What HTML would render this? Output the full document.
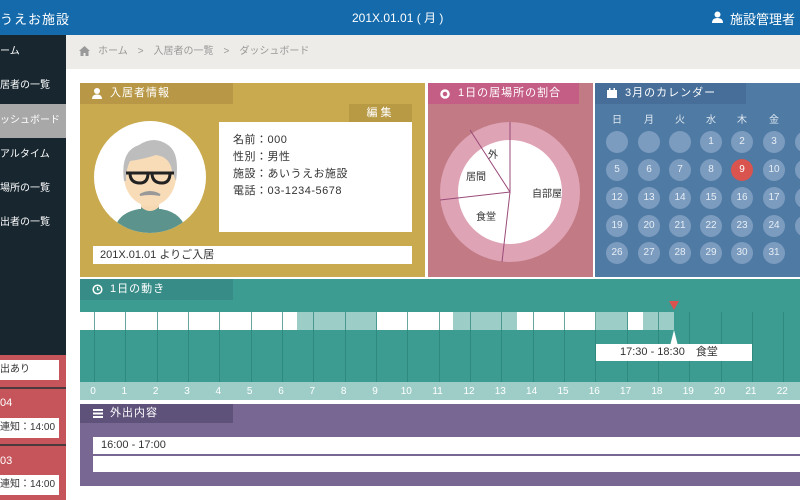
<!DOCTYPE html>
<html><head><meta charset="utf-8"><style>
*{margin:0;padding:0;box-sizing:border-box}
body{width:800px;height:500px;overflow:hidden;background:#fff;font-family:"Liberation Sans","Noto Sans CJK JP",sans-serif;position:relative;font-size:11px}
.a{position:absolute}
.hdr{left:0;top:0;width:800px;height:35px;background:#146aab;color:#fff}
.side{left:0;top:35px;width:66px;height:465px;background:#17262f}
.side div{position:absolute;left:0;width:66px;color:#fff;font-size:10px;height:34px;line-height:34px}
.crumb{left:66px;top:35px;width:734px;height:34px;background:#eeece8;color:#999;font-size:10px;line-height:34px}
.tab{position:absolute;left:0;top:0;height:21px;line-height:21px;color:#fff;font-size:11px;padding-left:30px;letter-spacing:1px}
.wb{position:absolute;background:#fff;color:#333}
.cal{position:absolute;width:22px;height:22px;border-radius:50%;background:#7c9cbf;color:#e6eef6;font-size:10px;text-align:center;line-height:22px}
.cl{position:absolute;color:#dfe8f1;font-size:10px;width:22px;text-align:center}
.hl{position:absolute;top:386px;color:#fff;font-size:10px;width:20px;text-align:center;z-index:3}
</style></head><body>
<div class="a hdr">
 <div class="a" style="left:-14px;top:9px;font-size:13px;letter-spacing:1px">いうえお施設</div>
 <div class="a" style="left:352px;top:9px;font-size:12px">201X.01.01 ( 月 )</div>
 <svg class="a" style="left:712px;top:11px" width="11" height="12"><circle cx="5.5" cy="3.5" r="3" fill="#fff"/><path d="M0 12 Q0 7 5.5 7 Q11 7 11 12Z" fill="#fff"/></svg>
 <div class="a" style="left:730px;top:9px;font-size:13px">施設管理者</div>
</div>
<div class="a side">
 <div style="top:0">ーム</div>
 <div style="top:34px">居者の一覧</div>
 <div style="top:69px;background:#a8a8a8">ッシュボード</div>
 <div style="top:103px">アルタイム</div>
 <div style="top:137px">場所の一覧</div>
 <div style="top:171px">出者の一覧</div>
</div>
<div class="a" style="left:0;top:355px;width:66px;height:145px;background:#c5555a"></div>
<div class="a" style="left:0;top:360px;width:59px;height:20px;background:#fff;font-size:10px;line-height:20px;color:#333">出あり</div>
<div class="a" style="left:0;top:387px;width:66px;height:2px;background:#4a3a3e"></div>
<div class="a" style="left:0;top:397px;color:#fff;font-size:11px">04</div>
<div class="a" style="left:0;top:418px;width:59px;height:20px;background:#fff;font-size:10px;line-height:20px;color:#333">連知：14:00</div>
<div class="a" style="left:0;top:444px;width:66px;height:2px;background:#4a3a3e"></div>
<div class="a" style="left:0;top:455px;color:#fff;font-size:11px">03</div>
<div class="a" style="left:0;top:475px;width:59px;height:20px;background:#fff;font-size:10px;line-height:20px;color:#333">連知：14:00</div>

<div class="a crumb"><svg class="a" style="left:13px;top:11px" width="11" height="10"><path d="M5.5 0 L11 5 H9.5 V10 H6.5 V7 H4.5 V10 H1.5 V5 H0Z" fill="#999"/></svg><span style="position:absolute;left:32px">ホーム　&gt;　入居者の一覧　&gt;　ダッシュボード</span></div>

<!-- resident -->
<div class="a" style="left:80px;top:83px;width:345px;height:194px;background:#c9aa4e">
 <div class="tab" style="width:153px;background:#b89847">入居者情報</div>
 <svg class="a" style="left:12px;top:5px" width="10" height="11"><circle cx="5" cy="3" r="3" fill="#fff"/><path d="M0 11 Q0 6.5 5 6.5 Q10 6.5 10 11Z" fill="#fff"/></svg>
 <div class="a" style="left:269px;top:21px;width:63px;height:18px;background:#b89a45;color:#fff;text-align:center;line-height:18px;letter-spacing:3px">編集</div>
 <div class="wb" style="left:139px;top:39px;width:193px;height:110px;padding:10px 0 0 14px;font-size:11px;line-height:17px;letter-spacing:.5px">名前：000<br>性別：男性<br>施設：あいうえお施設<br>電話：03-1234-5678</div>
 <div class="wb" style="left:13px;top:163px;width:319px;height:18px;font-size:11px;line-height:18px;padding-left:7px">201X.01.01 よりご入居</div>
 <svg class="a" style="left:14px;top:38px" width="112" height="112">
  <defs><clipPath id="c"><circle cx="56" cy="56" r="56"/></clipPath></defs>
  <circle cx="56" cy="56" r="56" fill="#fff"/>
  <g clip-path="url(#c)">
   <path d="M20 112 Q22 92 45 88 L67 88 Q90 92 92 112Z" fill="#5c948d"/>
   <rect x="47" y="70" width="18" height="22" fill="#f6d9b3"/>
   <path d="M47 86 Q56 94 65 86 L65 92 Q56 98 47 92Z" fill="#5c948d"/>
   <ellipse cx="56" cy="55" rx="26" ry="30" fill="#f8dcb8"/>
   <path d="M30 60 Q26 30 45 24 Q60 14 74 24 Q86 32 82 60 L78 50 Q76 36 62 34 Q50 38 36 40 Q32 48 32 60Z" fill="#bdbdbd"/>
   <path d="M32 52 L80 52 M36 52 Q36 62 46 62 Q54 62 54 52 M58 52 Q58 62 68 62 Q76 62 76 52" stroke="#222" stroke-width="3" fill="none"/>
   <path d="M46 74 Q56 68 66 74 Q56 72 46 74Z" fill="#999" stroke="#999" stroke-width="2"/>
  </g>
 </svg>
</div>

<!-- pie -->
<div class="a" style="left:428px;top:83px;width:165px;height:194px;background:#c27a85">
 <div class="tab" style="width:151px;background:#c45e85">1日の居場所の割合</div>
 <svg class="a" style="left:12px;top:6px" width="10" height="10"><circle cx="5" cy="5" r="3.5" fill="none" stroke="#fff" stroke-width="2.5"/></svg>
 <svg class="a" style="left:12px;top:39px" width="140" height="140">
  <circle cx="70" cy="70" r="70" fill="#dea3b4"/>
  <circle cx="70" cy="70" r="52" fill="#fff"/>
  <path d="M70 0 L70 70 L30 8 M70 70 L0 78 M70 70 L62 140" stroke="#9a4a78" stroke-width="1" fill="none"/>
  <text x="92" y="75" font-size="10" fill="#333" font-family="Noto Sans CJK JP">自部屋</text>
  <text x="48" y="36" font-size="10" fill="#333" font-family="Noto Sans CJK JP">外</text>
  <text x="26" y="58" font-size="10" fill="#333" font-family="Noto Sans CJK JP">居間</text>
  <text x="36" y="98" font-size="10" fill="#333" font-family="Noto Sans CJK JP">食堂</text>
 </svg>
</div>

<!-- calendar -->
<div class="a" style="left:595px;top:83px;width:205px;height:194px;background:#4f7aa3">
 <div class="tab" style="width:151px;background:#466e98">3月のカレンダー</div>
 <svg class="a" style="left:12px;top:5px" width="10" height="10"><rect x="0" y="2" width="10" height="8" fill="#fff"/><rect x="2" y="0" width="1.5" height="3" fill="#fff"/><rect x="6.5" y="0" width="1.5" height="3" fill="#fff"/></svg>
</div>
<div id="cal"></div>

<!-- timeline -->
<div class="a" style="left:80px;top:279px;width:720px;height:121px;background:#3d9c92">
 <div class="tab" style="width:153px;background:#378c87">1日の動き</div>
 <svg class="a" style="left:12px;top:5px" width="11" height="11"><circle cx="5.5" cy="5.5" r="4.3" fill="none" stroke="#fff" stroke-width="1.5"/><path d="M5.5 3 V5.8 H7.5" stroke="#fff" stroke-width="1.2" fill="none"/></svg>
</div>
<div class="a" style="left:80px;top:312px;width:594px;height:18px;background:#fff"></div>
<div class="a" style="left:297px;top:312px;width:80px;height:18px;background:#9ccdc7"></div>
<div class="a" style="left:453px;top:312px;width:64px;height:18px;background:#9ccdc7"></div>
<div class="a" style="left:596px;top:312px;width:32px;height:18px;background:#9ccdc7"></div>
<div class="a" style="left:643px;top:312px;width:31px;height:18px;background:#9ccdc7"></div>
<div class="a" style="left:80px;top:382px;width:720px;height:18px;background:#9ecdc8"></div>
<div id="lines"></div>
<svg class="a" style="left:669px;top:301px" width="10" height="10"><path d="M0 0 H10 L5 9Z" fill="#d9534f"/></svg>
<svg class="a" style="left:669px;top:330px" width="10" height="16"><path d="M5 0 L9 16 H1Z" fill="#fff"/></svg>
<div class="a" style="left:596px;top:344px;width:156px;height:17px;background:#fff;color:#333;font-size:11px;line-height:17px;padding-left:24px">17:30 - 18:30　食堂</div>

<!-- outing -->
<div class="a" style="left:80px;top:404px;width:720px;height:82px;background:#786693">
 <div class="tab" style="width:153px;height:19px;line-height:19px;background:#5e517a">外出内容</div>
 <svg class="a" style="left:13px;top:5px" width="10" height="9"><rect y="0" width="10" height="2" fill="#fff"/><rect y="3.5" width="10" height="2" fill="#fff"/><rect y="7" width="10" height="2" fill="#fff"/></svg>
 <div class="wb" style="left:13px;top:33px;width:707px;height:17px;line-height:17px;padding-left:8px;font-size:11px">16:00 - 17:00</div>
 <div class="wb" style="left:13px;top:52px;width:707px;height:16px"></div>
</div>
<script>
var h='';
var days=['日','月','火','水','木','金','土'];
var xs=[606,638,669,700,731,763,795];
for(var i=0;i<7;i++)h+='<div class="cl" style="left:'+xs[i]+'px;top:111px">'+days[i]+'</div>';
var ys=[131,159,187,215,242];var n=-3;
for(var r=0;r<5;r++)for(var c=0;c<7;c++){n++;if(n>31)continue;
var t=n>0?n:'';var bg=n==9?'background:#d9534f;color:#fff;':'';
h+='<div class="cal" style="left:'+xs[c]+'px;top:'+ys[r]+'px;'+bg+'">'+t+'</div>';}
document.getElementById('cal').innerHTML=h;
var l='';
for(var k=0;k<23;k++){var x=94+31.33*k;l+='<div class="a" style="left:'+x.toFixed(1)+'px;top:312px;width:1px;height:70px;background:rgba(40,130,120,.7)"></div>';
l+='<div class="hl" style="left:'+(x-11).toFixed(1)+'px">'+k+'</div>';}
document.getElementById('lines').innerHTML=l;
</script>
</body></html>
